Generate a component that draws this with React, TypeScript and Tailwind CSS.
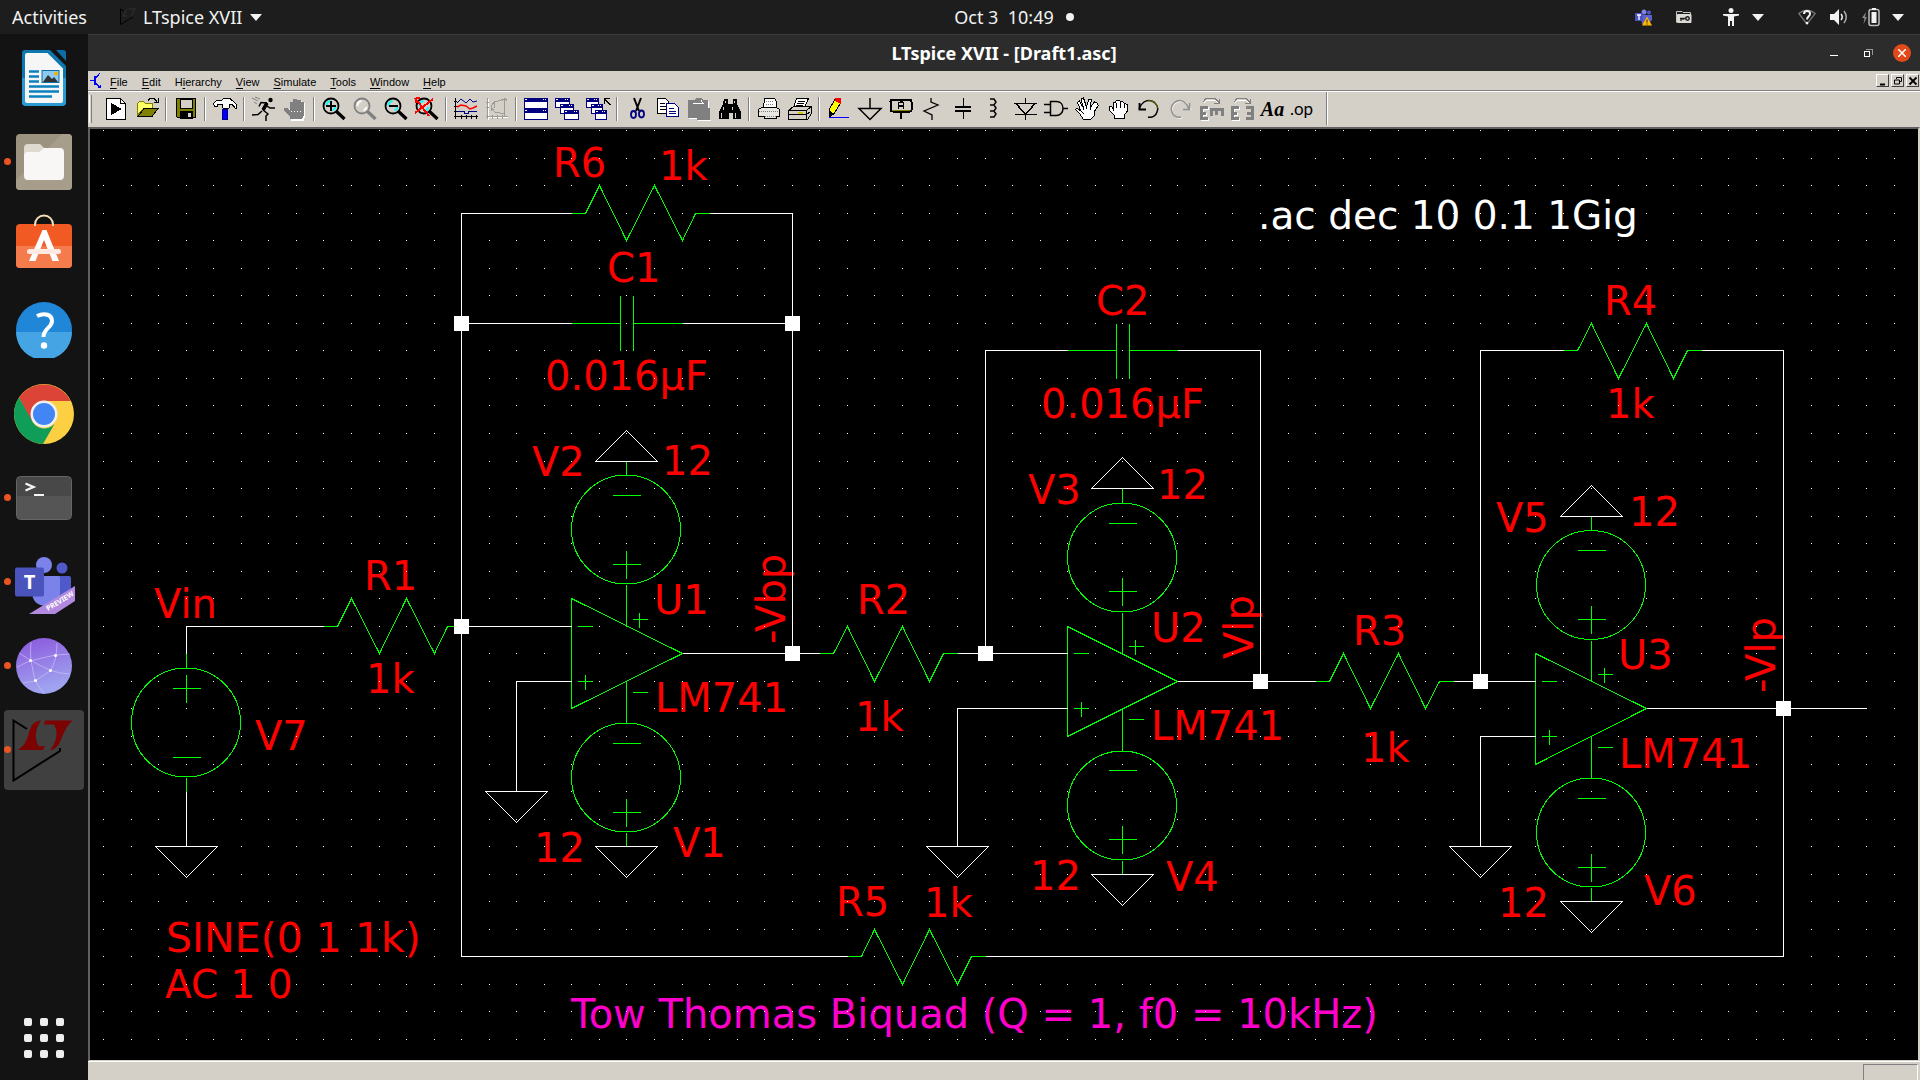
import React from "react";

type P = { children?: React.ReactNode };

/* ---------- schematic geometry: one unit is one grid step ---------- */
const STEP = 27.545;
const X = (k: number) => Math.round(103.1 + STEP * k) + 0.5;
const Y = (k: number) => Math.round(130 + STEP * k) + 0.5;
const line = (pts: [number, number][]) =>
  pts.map(([x, y], i) => `${i ? "L" : "M"}${X(x)} ${Y(y)}`).join("");

const GRID = (() => {
  let d = "";
  for (let i = 0; i < 66; i++)
    for (let j = 0; j < 34; j++) d += `M${X(i) - 0.5} ${Y(j) - 0.5}h1v1h-1z`;
  return d;
})();

const WIRES: [number, number][][] = [
  [[17, 3], [13, 3], [13, 30], [27, 30]],
  [[22, 3], [25, 3], [25, 19]],
  [[13, 7], [17, 7]],
  [[21, 7], [25, 7]],
  [[3, 19], [3, 18], [8, 18]],
  [[13, 18], [17, 18]],
  [[3, 24], [3, 26]],
  [[17, 20], [15, 20], [15, 24]],
  [[21, 19], [26, 19]],
  [[31, 19], [35, 19]],
  [[32, 19], [32, 8], [35, 8]],
  [[39, 8], [42, 8], [42, 20]],
  [[35, 21], [31, 21], [31, 26]],
  [[39, 20], [44, 20]],
  [[49, 20], [52, 20]],
  [[50, 20], [50, 8], [53, 8]],
  [[58, 8], [61, 8], [61, 30], [32, 30]],
  [[52, 22], [50, 22], [50, 26]],
  [[56, 21], [64, 21]],
];
const NODES: [number, number][] = [
  [13, 7], [25, 7], [13, 18], [25, 19], [32, 19], [42, 20], [50, 20], [61, 21],
];
const RESISTORS: [number, number][] = [[17, 3], [8, 18], [26, 19], [44, 20], [53, 8], [27, 30]];
const CAPACITORS: [number, number][] = [[19, 7], [37, 8]];
const OPAMPS: [number, number][] = [[17, 19], [35, 20], [52, 21]];

const LABELS: [number, number, string][] = [
  [553, 177, "R6"], [659, 180, "1k"], [607, 282, "C1"], [545, 390, "0.016µF"],
  [154, 618, "Vin"], [364, 590, "R1"], [366, 693, "1k"], [255, 750, "V7"],
  [532, 476, "V2"], [662, 475, "12"], [654, 614, "U1"], [655, 712, "LM741"],
  [534, 862, "12"], [673, 857, "V1"], [857, 614, "R2"], [855, 731, "1k"],
  [836, 916, "R5"], [924, 917, "1k"],
  [1096, 315, "C2"], [1041, 418, "0.016µF"], [1028, 504, "V3"], [1157, 499, "12"],
  [1151, 642, "U2"], [1151, 740, "LM741"], [1030, 890, "12"], [1166, 891, "V4"],
  [1353, 645, "R3"], [1361, 762, "1k"],
  [1604, 315, "R4"], [1606, 418, "1k"], [1496, 532, "V5"], [1629, 526, "12"],
  [1618, 669, "U3"], [1619, 768, "LM741"], [1498, 917, "12"], [1644, 905, "V6"],
];
const NETS: [number, number, string][] = [
  [785, 644, "-Vbp"], [1253, 659, "Vlp"], [1775, 693, "-Vlp"],
];

function Source({ x, y, flip }: { x: number; y: number; flip?: boolean }) {
  const cx = X(x);
  const plus = Y(y + (flip ? 1.25 : -1.25));
  const minus = Y(y + (flip ? -1.25 : 1.25));
  return (
    <>
      <circle cx={cx - 0.5} cy={(Y(y - 2) + Y(y + 2)) / 2} r={54.5} />
      <path d={`M${cx} ${Y(y - 2.5)}V${Y(y - 2)}M${cx} ${Y(y + 2)}V${Y(y + 2.5)}`} />
      <path d={`M${cx - 14} ${plus}h28M${cx} ${plus - 14}v28M${cx - 14} ${minus}h28`} />
    </>
  );
}

function Schematic() {
  const ground = (x: number, y: number, up = false) =>
    `M${X(x) - 31} ${Y(y)}h62L${X(x)} ${Y(y) + (up ? -31 : 31)}z`;
  return (
    <svg className="block h-full w-full" aria-label="Tow Thomas Biquad schematic" role="img">
      <g transform="translate(-90 -129)">
        <g fill="#ff0000" fontSize="40" fontFamily='"DejaVu Sans", sans-serif'>
          {LABELS.map(([x, y, t], i) => (
            <text key={i} x={x} y={y}>{t}</text>
          ))}
          {NETS.map(([x, y, t], i) => (
            <text key={i} transform={`translate(${x} ${y}) rotate(-90)`}>{t}</text>
          ))}
          <text x="166" y="952" fontSize="41">SINE(0 1 1k)</text>
          <text x="165" y="998" fontSize="39">AC 1 0</text>
          <text x="1258" y="229" fontSize="39" fill="#ffffff">.ac dec 10 0.1 1Gig</text>
          <text x="571" y="1028" fill="#ff00cc">Tow Thomas Biquad (Q = 1, f0 = 10kHz)</text>
        </g>
        <path d={GRID} fill="#ffffff" shapeRendering="crispEdges" />
        <g fill="none" stroke="#00ff00" shapeRendering="crispEdges">
          {RESISTORS.map(([x, y], i) => (
            <path key={i} d={line([[x, y], [x + 0.5, y], [x + 1, y - 1], [x + 2, y + 1], [x + 3, y - 1], [x + 4, y + 1], [x + 4.5, y], [x + 5, y]])} />
          ))}
          {CAPACITORS.map(([x, y], i) => (
            <path key={i} d={`M${X(x - 2)} ${Y(y)}H${X(x) - 6}M${X(x) + 7} ${Y(y)}H${X(x + 2)}M${X(x) - 6} ${Y(y - 1)}V${Y(y + 1)}M${X(x) + 7} ${Y(y - 1)}V${Y(y + 1)}`} />
          ))}
          {OPAMPS.map(([x, y], i) => (
            <g key={i}>
              <path d={line([[x, y - 2], [x + 4, y], [x, y + 2]]) + "z"} />
              <path d={line([[x + 2, y - 2], [x + 2, y - 1]]) + line([[x + 2, y + 1], [x + 2, y + 2]])} />
              <path d={`M${X(x) + 6} ${Y(y - 1)}h15M${X(x) + 6} ${Y(y + 1)}h15M${X(x + 0.5)} ${Y(y + 1) - 7}v15`} />
              <path d={`M${X(x + 2) + 6} ${Y(y - 1.25)}h15M${X(x + 2) + 13} ${Y(y - 1.25) - 7}v15M${X(x + 2) + 6} ${Y(y + 1.4)}h15`} />
              <Source x={x + 2} y={y - 4.5} flip />
              <Source x={x + 2} y={y + 4.5} flip />
            </g>
          ))}
          <Source x={3} y={21.5} />
        </g>
        <g fill="none" stroke="#ffffff" shapeRendering="crispEdges">
          {WIRES.map((w, i) => (
            <path key={i} d={line(w)} />
          ))}
          <path d={ground(3, 26) + ground(15, 24) + ground(31, 26) + ground(50, 26)} />
          {OPAMPS.map(([x, y], i) => (
            <path key={i} d={ground(x + 2, y - 7, true) + ground(x + 2, y + 7)} />
          ))}
        </g>
        {NODES.map(([x, y], i) => (
          <rect key={i} x={X(x) - 7.5} y={Y(y) - 7.5} width="15" height="15" fill="#ffffff" />
        ))}
      </g>
    </svg>
  );
}

/* ---------- toolbar ---------- */
const Icon = ({ children }: P) => (
  <svg viewBox="0 0 24 24" className="h-6 w-6 overflow-visible" fill="none" stroke="#000" shapeRendering="crispEdges">
    {children}
  </svg>
);

const Lens = ({ color = "#000", shine = "#00ffff", children }: P & { color?: string; shine?: string }) => (
  <Icon>
    <g shapeRendering="auto">
      <path d="M14 14l8.500 8" stroke={color} strokeWidth="3.200" />
      <circle cx="9" cy="9" r="7.500" stroke={color} strokeWidth="1.800" fill="#d4d0c8" />
      <path d="M4.500 9a5 5 0 0 1 4-5M13.500 10a5 5 0 0 1-3 3.500" stroke={shine} strokeWidth="1.800" />
    </g>
    {children}
  </Icon>
);

const Win = ({ x, y, w, h }: { x: number; y: number; w: number; h: number }) => (
  <g>
    <rect x={x} y={y} width={w} height={h} fill="#000080" stroke="none" />
    <rect x={x + 1} y={y + 4} width={w - 2} height={h - 5} fill="#ffffff" stroke="none" />
    <path d={`M${x + 1} ${y + 1.5}h2M${x + w - 5} ${y + 1.5}h1M${x + w - 3} ${y + 1.5}h1`} stroke="#ffffff" />
  </g>
);

const openHand =
  "M8 22L5 17L0.500 12.500L2 11l4 3L2.500 5.500L4.500 4l4 7L6 2L8.500 1l3 9L14 2l2.500 0.500L15 11l4.500-6L22 6 23.500 8.500 19 15v4L16 22z";
const closedHand = "M8.500 21.500v-3L3 13v-3l2.500-.500L7.500 12V5h2l1.500-2h2l1.500 1.500h2L18 6l1.500.500 2 1.500v6L18 18.500v3z";

const EM = ({ mirrored }: { mirrored?: boolean }) => (
  <Icon>
    <g stroke="#fff" transform="translate(1 1)">
      <path d="M4 5l3-3h9l3 4" />
    </g>
    <path d="M4 5l3-3.500h9l4 4M20 2v4h-5" stroke="#808080" />
    <g stroke="#fff" strokeWidth="3" transform="translate(1 1)">
      <path d="M8.500 10.500H2v11h6.500M2 16h5" />
    </g>
    <path d="M8.500 10.500H2v11h6.500M2 16h5" stroke="#808080" strokeWidth="3" />
    {mirrored ? (
      <path d="M16 10.500h6v11h-6M17 16h5" stroke="#808080" strokeWidth="3" />
    ) : (
      <path d="M12 19v-6.500h11V19M17.500 13v5" stroke="#808080" strokeWidth="3" />
    )}
  </Icon>
);

const GROUPS: [string, React.ReactNode][][] = [
  [
    ["Run", <Icon><path d="M2.500 1.500h14l5 5v16h-19z" fill="#fff" /><path d="M16.500 1.500v5h5" /><path d="M7 6l11 6-11 6z" fill="#000" stroke="none" /></Icon>],
    ["Open", <Icon><path d="M2.500 18V6.500l2-2h4l2 2h7V11H9z" fill="#ffff66" stroke="#808000" /><path d="M3 19.500L9 11.500h14l-6 8z" fill="#808000" /><path d="M13 3.500l2-2h4l3 3M23 1v4h-4" /></Icon>],
  ],
  [["Save", <Icon><path d="M2.500 1.500h19v19h-18l-1-1z" fill="#808000" /><path d="M6 2h12v9H6z" fill="#d4d0c8" /><path d="M6 14h12v7H6z" fill="#000" /><path d="M14 16h3v4h-3z" fill="#d4d0c8" stroke="none" /></Icon>]],
  [["Control Panel", <Icon><path d="M9.500 12h4.500v10H9.500z" fill="#0000ff" stroke="#000080" /><path d="M.500 6.500L4 3h5l2-1.500h6L23 7v4h-1l-3-4h-2l-1 4h-6L9 7.500H4V9H1.500z" fill="#fff" /></Icon>]],
  [
    ["Run simulation", <Icon><g shapeRendering="auto"><circle cx="18.500" cy="3" r="2.200" fill="#000" stroke="none" /><path d="M11 13l5 4-2 2v5M10 14l-4 3.500-6 .500M15 6l-6-.500-2 4M15 9l3 2h5" strokeWidth="1.500" /><path d="M14 5l2 2-4 7-2-2z" fill="#000" /><path d="M0 1l6 3M3 0l5 2M2 5l3 2" stroke="#808080" /></g></Icon>],
    ["Halt", <Icon><path d="M8 24V21L3 15v-3h3l2 2V6h3V3h4v1h4v2h3v13l-1 5z" fill="#fff" stroke="none" /><path d="M7 22V19L1 14v-3h3l3 3V5h3V2h4v1h4v2h3v13l-2 4z" fill="#808080" stroke="none" /><path d="M8 14.500h12" stroke="#fff" strokeDasharray="1 2" /></Icon>],
  ],
  [
    ["Zoom in", <Lens><path d="M4 9h10M9 4v10" strokeWidth="2" /></Lens>],
    ["Pan", <Lens color="#808080" shine="#ffffff" />],
    ["Zoom out", <Lens><path d="M5 9h9" strokeWidth="2" /></Lens>],
    ["Zoom full extents", <Lens><path d="M0 1l14 18M18 2L0 16M1 1l4 0M1 1v5" stroke="#ff0000" strokeWidth="2" /></Lens>],
  ],
  [
    ["Autorange", <Icon><path d="M1.500 1v21M0 4.500h3M0 9.500h3M0 14.500h3M0 19.500h24M7.500 18v4M12.500 18v4M17.500 18v4M22.500 18v4" /><g shapeRendering="auto"><path d="M3 6l4-4 5 4 4-4 3 3 4-1" stroke="#000080" /><path d="M3 10l4-2 5 1 4 3 3-1 4-2" stroke="#ff0000" strokeWidth="1.500" /></g><path d="M3 14.500h7v2h4v-2h9" stroke="#000080" /></Icon>],
    ["Plot settings", <Icon><g stroke="#fff" transform="translate(1 1)"><path d="M2.500 1v21M2 19.500h20" /></g><path d="M2.500 1v21M1 5.500h3M1 10.500h3M1 19.500h22M7.500 18v4M12.500 18v4M17.500 18v4M19.500 1v18M17 4l3-3 2 3M6 10l3-5 11-3M6 10l4 5 10 2M6 8v6M9 5v6" stroke="#9a9a96" /></Icon>],
  ],
  [
    ["Tile windows", <Icon><Win x={0} y={1} w={24} h={11} /><Win x={0} y={12} w={24} h={11} /></Icon>],
    ["Cascade windows", <Icon><Win x={0} y={1} w={15} h={10} /><Win x={5} y={7} w={14} h={10} /><Win x={9} y={13} w={15} h={10} /></Icon>],
    ["Close all windows", <Icon><Win x={0} y={1} w={13} h={10} /><Win x={5} y={7} w={12} h={10} /><Win x={9} y={13} w={12} h={10} /><path d="M18.500 7V1.500H24M19 2l5 6" stroke="#000" strokeWidth="1.500" /></Icon>],
  ],
  [
    ["Cut", <Icon><g shapeRendering="auto"><path d="M9 1l5 13M16 1L11 14" strokeWidth="2" /><ellipse cx="8.500" cy="17.500" rx="2.500" ry="3.500" stroke="#000080" strokeWidth="1.800" /><ellipse cx="16.500" cy="17" rx="2.500" ry="3.500" stroke="#000080" strokeWidth="1.800" /></g></Icon>],
    ["Copy", <Icon><path d="M1.500 1.500h8l3 3v12h-11z" fill="#fff" /><path d="M4 6.500h5M4 9.500h6M4 12.500h6" /><path d="M10.500 6.500h8l4 4v9h-12z" fill="#fff" stroke="#000080" /><path d="M13 11.500h5M13 14.500h7M13 16.500h7" stroke="#000080" /></Icon>],
    ["Paste", <Icon><path d="M2 4h20v18l2 2H11v-2H2z" fill="#fff" stroke="none" /><path d="M1 3h6l2-2h5l2 2h5v8h2v12H10v-2H1z" fill="#808080" stroke="none" /><path d="M6 6.500h10l-2-3" stroke="#fff" /></Icon>],
    ["Find", <Icon><path d="M6 2h4v5h5V2h4v5l4 8v7h-8v-6h-4v6H1v-7l4-8z" fill="#000" stroke="none" /><path d="M7.500 4v2M16.500 4v2M5.500 10v3M14.500 10v3M3.500 16v5M17.500 16v5" stroke="#d4d0c8" /></Icon>],
  ],
  [
    ["Print setup", <Icon><path d="M6.500 10.500l1-9h10l2 3v6" fill="#fff" /><path d="M1.500 12.500l3-2h15l3 2v7h-3v2h-12v-2h-6z" fill="#e8e6e0" /><path d="M2 14.500h20M8 19.500h11M9 4.500h8M9 7.500h8" stroke="#808080" strokeDasharray="1 1" /></Icon>],
    ["Print", <Icon><path d="M8.500 1.500h12l-4 9h-11z" fill="#fff" /><path d="M10 4.500h7M9 6.500h7M8 8.500h7" /><path d="M.500 13.500l5-4h18v7l-4 6H.500zM.500 13.500h18v9M19 13l4-3M.500 17.500h18l4-3" fill="#d4d0c8" /><path d="M10 15.500h5" stroke="#cccc00" strokeWidth="2" /></Icon>],
  ],
  [
    ["Wire", <Icon><path d="M2 19.500V13l6-11 6 3-7 12z" fill="#ffff00" /><path d="M2 20v-6l5 3z" fill="#000" /><path d="M8 1h5v5l-4-2z" fill="#ff0000" stroke="#ff0000" /><path d="M2 20.500h20" stroke="#0000ff" strokeWidth="1" /></Icon>],
    ["Ground", <Icon><path d="M12 1v10M1 11.500h22l-11 11z" strokeWidth="1.500" shapeRendering="auto" /></Icon>],
    ["Label net", <Icon><rect x="1.500" y="2.500" width="21" height="12" rx="2" strokeWidth="2" /><path d="M3 13.500h18" stroke="#808000" /><path d="M9.500 12V6l2-1h2l1 1v6M9.500 9h5M12 15v7" strokeWidth="1.500" /></Icon>],
    ["Resistor", <Icon><path d="M11 1v4l7 3L4 14l8 4v5" strokeWidth="1.300" shapeRendering="auto" /></Icon>],
    ["Capacitor", <Icon><path d="M4 10h16M4 14h16" strokeWidth="2" /><path d="M12.500 1v8M12.500 15v7" /></Icon>],
    ["Inductor", <Icon><path d="M8 2h4l2 3-2 3H8h4l2 3-2 3H8h4l2 3-2 3H8" strokeWidth="1.500" shapeRendering="auto" /></Icon>],
    ["Diode", <Icon><path d="M1 6.500h23M2 17.500h22M12.500 1v5M12.500 18v5M3 6.500l9.500 11 9.500-11" strokeWidth="1.500" /></Icon>],
    ["Component", <Icon><path d="M6.500 4.500h6c4 0 6.500 3 6.500 7s-3 7-6.500 7h-6zM0 7.500h6M0 15.500h6M19 11.500h5" strokeWidth="1.500" shapeRendering="auto" /></Icon>],
    ["Move", <Icon><path d={openHand} fill="#fff" /><path d="M6 14l3 3M8.500 11v2M11.500 10v2M15 11v2" /></Icon>],
    ["Drag", <Icon><path d={closedHand} fill="#fff" /><path d="M7.500 12v2M10.500 6v5M14.500 5v6M18.500 7v4" /></Icon>],
    ["Undo", <Icon><g shapeRendering="auto"><path d="M2 12C4 6 9 2 15 4c5 2 7 7 5 11-1 4-5 6-9 5" strokeWidth="1.500" /><path d="M11 4c5-1 9 2 9.500 7" stroke="#808000" /><path d="M2.500 6v6.500H9" strokeWidth="1.800" /></g></Icon>],
    ["Redo", <Icon><g shapeRendering="auto"><path d="M23 13C21 7 16 3 10 5c-5 2-7 7-5 11 1 4 5 6 9 5" stroke="#fff" /><path d="M21 12C19 6 14 2 9 4c-5 2-7 7-5 11 1 4 5 6 9 5" stroke="#909090" strokeWidth="1.500" /><path d="M21.500 6v6.500H15" stroke="#909090" strokeWidth="1.500" /></g></Icon>],
    ["Rotate", <EM />],
    ["Mirror", <EM mirrored />],
    ["Text", <span className="font-['Liberation_Serif',serif] text-[20px] font-bold italic leading-6">Aa</span>],
    ["SPICE directive", <span className="pr-1 font-['Lato',sans-serif] text-[17px] leading-5">.op</span>],
  ],
];

const Separator = () => (
  <span className="flex w-2 justify-center">
    <span className="h-6 w-0.5 border-l border-r border-l-[#808080] border-r-white" />
  </span>
);

function Toolbar() {
  return (
    <div className="flex h-[35px] items-center bg-[#d4d0c8] pb-0.5 pl-px" role="toolbar">
      <span className="mr-2 h-7 w-[3px] border-l border-r border-l-white border-r-[#808080]" />
      {GROUPS.map((g, i) => (
        <React.Fragment key={i}>
          {i > 0 && <Separator />}
          {g.map(([name, icon]) => (
            <button key={name} aria-label={name} className="flex h-8 w-[31px] items-center justify-center text-black">
              {icon}
            </button>
          ))}
        </React.Fragment>
      ))}
      <span className="ml-[7px] h-full w-0.5 border-l border-r border-l-[#808080] border-r-white" />
    </div>
  );
}

/* ---------- dock ---------- */
const DOCK: { name: string; running?: boolean; active?: boolean; icon: React.ReactNode }[] = [
  {
    name: "LibreOffice Writer",
    icon: (
      <svg viewBox="0 0 56 56" className="h-14 w-14">
        <path d="M9 0h25l16 16v36a4 4 0 0 1-4 4H10a4 4 0 0 1-4-4V3a3 3 0 0 1 3-3z" fill="#0d78b0" />
        <path d="M6 28h44v24a4 4 0 0 1-4 4H10a4 4 0 0 1-4-4z" fill="#2b9ad2" />
        <path d="M11 3h20.500L47 18.500V51a2 2 0 0 1-2 2H11a2 2 0 0 1-2-2V5a2 2 0 0 1 2-2z" fill="#f6f6f6" />
        <path d="M40 0h7a3 3 0 0 1 3 3v8z" fill="#0c6ea6" />
        <path d="M13 21.500h10M13 26.500h10M13 31.500h10M13 36.500h30M13 41.500h30M13 46.500h23" stroke="#0a80bd" strokeWidth="2.400" />
        <rect x="26" y="20.500" width="17" height="12" fill="#8ccaf0" stroke="#0a6ea8" />
        <path d="M27 32l5-7 4 4 2-2 4 5z" fill="#333" />
        <circle cx="40" cy="23.500" r="2" fill="#f5b400" />
      </svg>
    ),
  },
  {
    name: "Files", running: true,
    icon: (
      <svg viewBox="0 0 56 56" className="h-14 w-14">
        <rect width="56" height="56" rx="4" fill="#9b937f" />
        <path d="M0 46L46 0h6a4 4 0 0 1 4 4v48a4 4 0 0 1-4 4H4a4 4 0 0 1-4-4z" fill="#a69e8b" />
        <path d="M8 14a4 4 0 0 1 4-4h12l4 4v10H8z" fill="#dedad0" />
        <path d="M12 18h11l5-4h16a4 4 0 0 1 4 4v24a4 4 0 0 1-4 4H12a4 4 0 0 1-4-4V22a4 4 0 0 1 4-4z" fill="#f8f7f5" />
      </svg>
    ),
  },
  {
    name: "Ubuntu Software",
    icon: (
      <svg viewBox="0 0 56 56" className="h-14 w-14 overflow-visible">
        <path d="M19 8V6.500a9 9 0 0 1 18 0V8" fill="none" stroke="#f8deb4" strokeWidth="2" />
        <rect y="6" width="56" height="44" rx="4" fill="#f15a22" />
        <path d="M0 28h56v18a4 4 0 0 1-4 4H4a4 4 0 0 1-4-4z" fill="#f47b4b" />
        <path d="M19 8V6M37 8V6" stroke="#f8deb4" strokeWidth="2" />
        <path d="M26.500 12h4L43 43h-6.500L28 22l-8.500 21H13z" fill="#fff" />
        <path d="M13.500 33.500h29" stroke="#ffe9e2" strokeWidth="5" strokeLinecap="round" />
      </svg>
    ),
  },
  {
    name: "Help",
    icon: (
      <svg viewBox="0 0 56 56" className="h-14 w-14">
        <circle cx="28" cy="28" r="28" fill="#1f86d8" />
        <path d="M0 30a28 28 0 0 0 56 0z" fill="#45a5e4" />
        <path d="M21 14c8-4 15-1 15 5 0 7-8.500 7-8.500 16" fill="none" stroke="#fff" strokeWidth="4" />
        <circle cx="28" cy="43.500" r="3.200" fill="#fff" />
      </svg>
    ),
  },
  {
    name: "Google Chrome",
    icon: (
      <svg viewBox="0 0 60 60" className="h-[60px] w-[60px]">
        <circle cx="30" cy="30" r="30" fill="#fdd044" />
        <path d="M5 13.500A30 30 0 0 1 56.500 17H30L17 37z" fill="#db4437" />
        <path d="M5 13.500L17.500 36a14 14 0 0 0 23 4L29 60A30 30 0 0 1 5 13.500z" fill="#0f9d58" />
        <circle cx="30" cy="30" r="13.500" fill="#f1f1f1" />
        <circle cx="30" cy="30" r="11" fill="#4285f4" />
      </svg>
    ),
  },
  {
    name: "Terminal", running: true,
    icon: (
      <svg viewBox="0 0 56 44" className="h-11 w-14">
        <rect x=".500" y=".500" width="55" height="43" rx="4" fill="#484848" stroke="#666" />
        <path d="M1 20h54v19a4 4 0 0 1-4 4H5a4 4 0 0 1-4-4z" fill="#555" />
        <path d="M9.500 7.500l8 3.500-8 3.500" fill="none" stroke="#f4f4f4" strokeWidth="2.300" />
        <path d="M18 19h10" stroke="#f4f4f4" strokeWidth="2" />
      </svg>
    ),
  },
  {
    name: "Microsoft Teams", running: true,
    icon: (
      <svg viewBox="0 -6 62 64" className="h-16 w-[62px]">
        <circle cx="49" cy="12" r="5.500" fill="#5059c9" />
        <path d="M45 20h11a2 2 0 0 1 2 2v20H45z" fill="#5059c9" />
        <circle cx="31" cy="9" r="8" fill="#7b83eb" />
        <path d="M19 20h26a2 2 0 0 1 2 2v14c0 9-6 14-14 14s-14-5-14-14z" fill="#7b83eb" />
        <rect x="2" y="11.500" width="29" height="29" rx="2" fill="#4b53bc" />
        <text x="16.500" y="33" textAnchor="middle" fill="#fff" fontSize="20" fontWeight="700" fontFamily='"Open Sans", sans-serif'>T</text>
        <path d="M62 30v15L42 58H16z" fill="#b18ae0" />
        <text transform="translate(35 55) rotate(-31)" fill="#fff" fontSize="7" fontWeight="700" fontFamily='"Noto Sans", sans-serif'>PREVIEW</text>
      </svg>
    ),
  },
  {
    name: "Network", running: true,
    icon: (
      <svg viewBox="0 0 56 56" className="h-14 w-14">
        <defs>
          <linearGradient id="orb" x1="0" y1="0" x2="0.300" y2="1">
            <stop offset="0" stopColor="#8a55dc" />
            <stop offset="1" stopColor="#a0a4f0" />
          </linearGradient>
        </defs>
        <circle cx="28" cy="28" r="28" fill="url(#orb)" />
        <path d="M15 4q-1 10 0 18.500-8 3-14 7M3 15q18 12 31 17 10 4 20 4M14 23q15-4 26-6l14-1M41 5q0 18-7 28l-15 10-12 2M15 23l4 19q4 8 9 13" fill="none" stroke="#d5c8f8" strokeOpacity=".6" />
        <g fill="#fff"><circle cx="14.500" cy="22.500" r="1.500" /><circle cx="39.500" cy="17.500" r="1.500" /><circle cx="34.500" cy="32.500" r="1.500" /><circle cx="19.500" cy="42.500" r="1.500" /></g>
      </svg>
    ),
  },
  {
    name: "LTspice XVII", running: true, active: true,
    icon: (
      <svg viewBox="0 0 64 64" className="h-16 w-16">
        <path d="M15 11L1.500 2.500v60L48 33v-3" fill="none" stroke="#000" strokeWidth="2" />
        <path d="M29 2.500c-6 8-7 19-2 26l6-.500-2 4H6c10-7 9-14 13-23 2-4 5-6 10-6.500z" fill="#7d0202" />
        <path d="M33 2.500h28c-6 4-9 12-12 19-2 6-6 10-11 11 6-8 9-17 4-26H32z" fill="#7d0202" />
      </svg>
    ),
  },
];

function Dock() {
  return (
    <nav className="flex w-[88px] shrink-0 flex-col bg-[#131313] pt-0.5" aria-label="Dock">
      {DOCK.map((d) => (
        <div key={d.name} className="relative flex h-[84px] items-center justify-center">
          <button
            aria-label={d.name}
            className={`flex h-20 w-20 items-center justify-center rounded ${d.active ? "bg-[#404040]" : ""}`}
          >
            {d.icon}
          </button>
          {d.running && <span className="absolute left-1 top-[38px] h-[7px] w-[7px] rounded-full bg-[#e95420]" />}
        </div>
      ))}
      <button aria-label="Show Applications" className="mx-auto mb-[22px] mt-auto grid grid-cols-3 gap-2">
        {Array.from({ length: 9 }, (_, i) => (
          <span key={i} className="h-2 w-2 rounded-[2px] bg-[#eeeeec]" />
        ))}
      </button>
    </nav>
  );
}

/* ---------- top bar ---------- */
const Caret = () => (
  <svg viewBox="0 0 12 7" className="h-[7px] w-3"><path d="M0 0h12L6 7z" fill="#f2f2f2" /></svg>
);

function TopBar() {
  return (
    <header className="grid h-[34px] shrink-0 grid-cols-[1fr_auto_1fr] items-center bg-[#1d1d1d] font-['Noto_Sans',sans-serif] text-[18px] leading-6 text-[#f2f2f2]">
      <div className="flex items-center pl-3">
        <button>Activities</button>
        <button className="ml-8 flex items-center">
          <svg viewBox="0 0 18 18" className="mr-1.5 h-[18px] w-[18px]">
            <path d="M5 3L1.500 1v15.500L14 9" fill="none" stroke="#000" />
            <path d="M8 1L4 8h4M10 1h6l-4 7" fill="none" stroke="#2b2b2b" strokeWidth="1.500" />
          </svg>
          LTspice XVII
          <span className="ml-2"><Caret /></span>
        </button>
      </div>
      <button className="relative ml-[88px] whitespace-pre">
        Oct 3  10:49
        <span className="absolute left-full top-2 ml-3 h-2 w-2 rounded-full bg-[#f2f2f2]" />
      </button>
      <div className="flex items-center justify-end pr-4">
        <svg viewBox="0 0 17 17" className="mr-6 h-[17px] w-[17px]">
          <circle cx="9" cy="3" r="2.500" fill="#7b83eb" /><circle cx="14" cy="3.500" r="2" fill="#5059c9" />
          <path d="M6 6h11v5l-4 4H7z" fill="#5a62d0" />
          <rect x="0" y="4" width="8" height="8" fill="#4b53bc" />
          <path d="M2 6h4M4 6v5" stroke="#fff" strokeWidth="1.300" />
          <path d="M12 7.500l5 9H7z" fill="#fcb900" /><path d="M12 10.500v3M12 14.500v1" stroke="#222" />
        </svg>
        <svg viewBox="0 0 16 13" className="mr-[31px] h-[13px] w-4">
          <path d="M.500 11.500V.500h5.500l1 1h7.500V3" fill="none" stroke="#c9c6bf" />
          <path d="M1.500 11.500v-8h13.500v8z" fill="#dcdad5" stroke="#dcdad5" />
          <path d="M10 7.500H4M5 8v2M7 8v1" stroke="#222" strokeWidth="1.300" fill="none" />
          <circle cx="11.500" cy="7.500" r="1.700" fill="none" stroke="#222" strokeWidth="1.500" />
        </svg>
        <svg viewBox="0 0 16 18" className="mr-[13px] h-[18px] w-4">
          <circle cx="8" cy="2.500" r="2.500" fill="#f2f2f2" />
          <path d="M0 6h16v1.500l-5 1V18H9v-5H7v5H5V8.500l-5-1z" fill="#f2f2f2" />
        </svg>
        <Caret />
        <svg viewBox="0 0 18 16" className="ml-[34px] mr-[14px] h-4 w-[18px]">
          <path d="M9 15L.800 4.500Q9-2 17.200 4.500z" fill="none" stroke="#777" strokeWidth="1.300" />
          <path d="M6 5c0-4 6.500-4 6 0 0 2.500-3 2.500-3 5.500" fill="none" stroke="#f2f2f2" strokeWidth="2" /><circle cx="9" cy="14" r="1.300" fill="#f2f2f2" />
        </svg>
        <svg viewBox="0 0 18 16" className="mr-[14px] h-4 w-[18px]">
          <path d="M0 5h4l5-5v16l-5-5H0z" fill="#f2f2f2" />
          <path d="M11 5q2.500 3 0 6" fill="none" stroke="#f2f2f2" strokeWidth="1.500" /><path d="M14 2q4.500 6 0 12" fill="none" stroke="#aaa" strokeWidth="1.500" />
        </svg>
        <svg viewBox="0 0 18 20" className="mr-3 h-5 w-[18px]">
          <path d="M4 5L0 11h2.500L1.500 17 5 10H3z" fill="#8a8a8a" />
          <rect x="7" y="2.500" width="10" height="16" rx="2" fill="none" stroke="#bdbdbd" strokeWidth="1.500" /><path d="M10 1h4v2h-4z" fill="#f2f2f2" /><rect x="9.500" y="5" width="5" height="11" fill="#f2f2f2" />
        </svg>
        <Caret />
      </div>
    </header>
  );
}

const MENUS: [string, string, string][] = [
  ["", "F", "ile"], ["", "E", "dit"], ["H", "i", "erarchy"], ["", "V", "iew"],
  ["", "S", "imulate"], ["", "T", "ools"], ["", "W", "indow"], ["", "H", "elp"],
];

function MdiButton({ name, children }: P & { name: string }) {
  return (
    <button aria-label={name} className="flex h-[13px] w-[13px] items-center justify-center border border-b-[#404040] border-l-white border-r-[#404040] border-t-white bg-[#d4d0c8]">
      <svg viewBox="0 0 10 10" className="h-2.5 w-2.5" fill="none" stroke="#000">{children}</svg>
    </button>
  );
}

export default function App() {
  return (
    <div className="flex h-screen w-full flex-col overflow-hidden bg-black">
      <TopBar />
      <div className="flex min-h-0 flex-1">
        <Dock />
        <main className="flex min-w-0 flex-1 flex-col">
          <div className="grid h-[37px] shrink-0 grid-cols-[1fr_auto_1fr] items-center border-t border-[#3b3b3b] bg-[#2c2c2c]">
            <span />
            <h1 className="font-['Noto_Sans',sans-serif] text-[18px] font-bold leading-6 text-white">LTspice XVII - [Draft1.asc]</h1>
            <div className="flex items-center justify-end gap-[21px] pr-[9px]">
              <button aria-label="Minimize" className="pt-1"><span className="block h-px w-2 bg-white" /></button>
              <button aria-label="Restore" className="ml-[5px]">
                <svg viewBox="0 0 8 8" className="h-2 w-2 overflow-visible" fill="none" stroke="#fff" shapeRendering="crispEdges"><path d="M.500 2.500h5v5h-5z" /><path d="M2 .500h6V6" stroke="#999" /></svg>
              </button>
              <button aria-label="Close" className="flex h-[18px] w-[18px] items-center justify-center rounded-full bg-[#e2491b]">
                <svg viewBox="0 0 8 8" className="h-2 w-2" stroke="#fff" strokeWidth="1.500"><path d="M0 0l8 8M8 0L0 8" /></svg>
              </button>
            </div>
          </div>
          <div className="flex h-5 shrink-0 items-center border-b border-[#808080] bg-[#d4d0c8]">
            <svg viewBox="0 0 12 16" className="ml-0.5 mr-px h-4 w-3" fill="none" stroke="#0000ff" shapeRendering="crispEdges">
              <path d="M0 7.500h4" /><path d="M4.500 3v9" strokeWidth="2" /><path d="M5 6l5-6M5 9l5 6" /><path d="M11 15V11l-4 4z" fill="#0000ff" stroke="none" />
            </svg>
            <div className="flex flex-1 pt-0.5 font-['Liberation_Sans',sans-serif] text-[11px] leading-4 text-black" role="menubar">
              {MENUS.map(([a, u, b]) => (
                <button key={u + b} role="menuitem" className="px-[7px]">
                  {a}<span className="underline underline-offset-2">{u}</span>{b}
                </button>
              ))}
            </div>
            <div className="flex gap-0.5 pr-px">
              <MdiButton name="Minimize document"><path d="M2 8.500h5" strokeWidth="2" /></MdiButton>
              <MdiButton name="Restore document"><path d="M3.500 3V1.500h5v4H7M1.500 4h5v4h-5z" /></MdiButton>
              <MdiButton name="Close document"><path d="M1.500 1.500l7 7M8.500 1.500l-7 7" strokeWidth="1.800" /></MdiButton>
            </div>
          </div>
          <div className="shrink-0 border-t border-white"><Toolbar /></div>
          <div className="min-h-0 flex-1 border-b border-l-2 border-r-2 border-t-2 border-b-[#d4d0c8] border-l-[#606060] border-r-[#d4d0c8] border-t-[#606060] bg-black">
            <Schematic />
          </div>
          <footer className="flex h-[19px] shrink-0 justify-end border-t border-white bg-[#d4d0c8] pr-0.5">
            <span className="mt-0.5 h-full w-[55px] border border-b-white border-l-[#808080] border-r-white border-t-[#808080]" />
          </footer>
        </main>
      </div>
    </div>
  );
}
